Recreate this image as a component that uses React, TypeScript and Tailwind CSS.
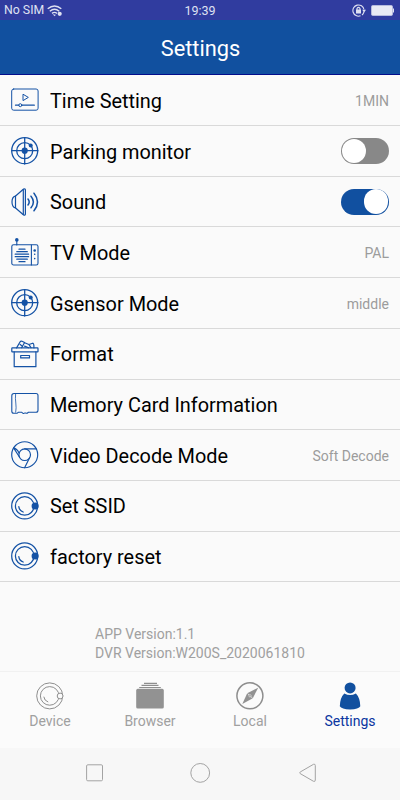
import type { ReactNode } from "react";

function Icon({ children, w = 1 }: { children: ReactNode; w?: number }) {
  return (
    <svg
      className="h-7 w-7 shrink-0"
      viewBox="0 0 28 28"
      fill="none"
      stroke="#1452a5"
      strokeWidth={w}
      strokeLinecap="round"
      strokeLinejoin="round"
    >
      {children}
    </svg>
  );
}

const TimeIcon = () => (
  <Icon>
    <rect x="0.7" y="3" width="26.4" height="21.2" rx="2" />
    <path d="M12 8.6v6l5-3z" />
    <path d="M4.5 19.2h3.2M11 19.2h12.3" strokeWidth="1.3" />
    <circle cx="9.3" cy="19.2" r="1.5" />
  </Icon>
);

const RadarIcon = () => (
  <Icon w={1.3}>
    <circle cx="13.7" cy="13.7" r="13" />
    <circle cx="13.7" cy="13.7" r="8" />
    <path d="M13.7 1v26M0.9 13.7h26" />
    <circle cx="13.7" cy="13.7" r="3.1" fill="#1452a5" stroke="none" />
    <circle cx="19.7" cy="8.4" r="2" fill="#1452a5" stroke="none" />
  </Icon>
);

const SoundIcon = () => (
  <Icon w={1.2}>
    <path d="M4.3 8.2 12.6 1q1.8-.7 1.8 1v24q0 1.7-1.8 1L4.3 19.8Q1 19 1 14t3.3-5.8z" />
    <path d="M4.5 8.2v11.5M12.3 1.5v25" />
    <path d="M17 11q2.4 3 0 6M20 8.2q4.8 5.8 0 11.6M23 5.2q7 8.8 0 17.6" strokeWidth="1.5" />
  </Icon>
);

const TvIcon = () => (
  <Icon w={1.1}>
    <rect x="0.8" y="6.7" width="26.2" height="20.3" rx="1.8" />
    <path d="M20.4 7v20M5.8 7V2.5" />
    <circle cx="5.8" cy="1.9" r="1.8" fill="#1452a5" stroke="none" />
    <path d="M8 11.2h6M5.8 13.7h10.5M4.2 16.2h13.4M4.2 18.7h13.4M5.8 21.2h10.5M8 23.7h6" strokeWidth="1.25" />
    <circle cx="23.7" cy="12.5" r="1.3" fill="#1452a5" stroke="none" />
    <path d="M23.7 16.2v.1M23.7 20.5v.1" strokeWidth="1.6" />
  </Icon>
);

const BoxIcon = () => (
  <Icon w={1.2}>
    <rect x="0.8" y="7.9" width="26.2" height="4" rx="0.5" />
    <path d="M3.2 11.9v14.8h21.7V11.9" />
    <rect x="9.7" y="15.5" width="8.8" height="2.4" />
    <path d="M5.6 7.9 9 2q.7-1.2 2-.7l2.6 1.2-3 5.2M13.6 2.7l4.3 1.8 3.8-1.3q1.4.2 1.2 4.7M9.2 4.5l2.4 2M13.6 6.1l4 1.6M18 4.7l2 3" />
  </Icon>
);

const CardIcon = () => (
  <Icon w={1.1}>
    <path d="M3 3.5h22q2 0 2 2v14.8q0 2-2 2h-7.6l-1.2 .9q-.8.3-1.4-.2h-1.2q-.7.8-1.6.3l-1.2-1H7.2L6 23.3H2.8q-2 0-2-2V5.7q0-2.2 2.2-2.2z" />
    <path d="M4.6 4q-.5 4.3.2 9t-.1 9.2" strokeWidth="0.8" />
  </Icon>
);

const ChromeIcon = () => (
  <Icon w={1.15}>
    <circle cx="13.7" cy="13.7" r="13" />
    <circle cx="13.7" cy="13.7" r="5.8" />
    <path d="M13.7 7.9h11.6M2.6 6.9l6 9.3M18.6 16.7l-5 10M2.6 6.9q3.8 1 5.4 5.2" />
  </Icon>
);

const Ring = ({ active }: { active?: boolean }) => (
  <>
    <circle cx="13.7" cy="13.9" r="13" />
    <circle cx="13.7" cy="13.9" r="9.3" />
    <path d="M7.8 14.7q.5 4 4.4 5.3" />
    <circle cx="24.1" cy="14" r="2.9" fill={active ? "#1452a5" : "#fafafa"} />
  </>
);

const RingIcon = () => (
  <Icon w={1.25}>
    <Ring active />
  </Icon>
);

const Value = ({ children }: { children: ReactNode }) => (
  <span className="pt-[2.4px] text-[14px] leading-5 text-[#9c9c9c]">{children}</span>
);

function Toggle({ on }: { on?: boolean }) {
  return (
    <span
      className={
        on
          ? "flex h-[26px] w-12 items-center justify-end rounded-full bg-[#1150a0] p-[0.7px]"
          : "flex h-[26px] w-12 items-center justify-start rounded-full bg-[#888888] p-[0.7px]"
      }
    >
      <span className="h-[24.6px] w-[24.6px] rounded-full bg-white" />
    </span>
  );
}

const rows: { icon: ReactNode; label: string; right?: ReactNode }[] = [
  { icon: <TimeIcon />, label: "Time Setting", right: <Value>1MIN</Value> },
  { icon: <RadarIcon />, label: "Parking monitor", right: <Toggle /> },
  { icon: <SoundIcon />, label: "Sound", right: <Toggle on /> },
  { icon: <TvIcon />, label: "TV Mode", right: <Value>PAL</Value> },
  { icon: <RadarIcon />, label: "Gsensor Mode", right: <Value>middle</Value> },
  { icon: <BoxIcon />, label: "Format" },
  { icon: <CardIcon />, label: "Memory Card Information" },
  { icon: <ChromeIcon />, label: "Video Decode Mode", right: <Value>Soft Decode</Value> },
  { icon: <RingIcon />, label: "Set SSID" },
  { icon: <RingIcon />, label: "factory reset" },
];

function Tab({ label, active, children }: { label: string; active?: boolean; children: ReactNode }) {
  return (
    <div className="flex w-[100px] flex-col items-center pt-[10px]">
      <svg className="h-7 w-7" viewBox="0 0 28 28" fill="none" stroke="#8e8e8e" strokeWidth="1">
        {children}
      </svg>
      <span
        className={
          active
            ? "mt-[1px] text-[14px] leading-5 text-[#0a35a0]"
            : "mt-[1px] text-[14px] leading-5 text-[#a0a0a0]"
        }
      >
        {label}
      </span>
    </div>
  );
}

export default function App() {
  return (
    <div className="flex h-[800px] w-[400px] flex-col overflow-hidden bg-[#fafafa] font-[Roboto,sans-serif]">
      <div className="grid h-5 shrink-0 grid-cols-3 items-center bg-[#303c9f] px-1 pt-px text-[12.5px] leading-[19px] text-[#dfe1f2]">
        <div className="flex items-center gap-[3px]">
          <span className="text-[12.3px]">No SIM</span>
          <svg className="h-3 w-4" viewBox="0 0 16 12" fill="none" stroke="#dfe1f2" strokeWidth="1.4">
            <path d="M.7 3.8Q7.5-2 14.3 3.8M2.8 6.2Q7.5 2.2 12.2 6.2M5 8.4q2.5-2 5 0" />
            <path d="m5.6 9.2 2 2 1.3-1.4z" fill="#dfe1f2" stroke="none" />
            <circle cx="12.7" cy="8.8" r="2.1" fill="#dfe1f2" stroke="none" />
          </svg>
        </div>
        <span className="text-center">19:39</span>
        <div className="flex items-center justify-end gap-[5px] pr-[2px] pb-px">
          <svg className="h-[13px] w-[14px]" viewBox="0 0 14 13" fill="none" stroke="#dfe1f2" strokeWidth="1.1">
            <path d="M8.5 11.8A5.6 5.6 0 1 1 12 5.5M12 7.5a5.6 5.6 0 0 1-2 3.5" />
            <path d="M10.2 5.8H14L12.1 8.5z" fill="#dfe1f2" stroke="none" />
            <rect x="4" y="5.5" width="5" height="4" fill="#dfe1f2" stroke="none" />
            <path d="M5 6V4.5q1.5-2.3 3 0V6" />
          </svg>
          <svg className="h-[11px] w-[23px]" viewBox="0 0 23 11">
            <rect x="0.5" y="0.5" width="21" height="10" rx="1.3" fill="#e9eaf5" stroke="#b7bbde" />
            <path d="M22.5 3.5v4" stroke="#dfe1f2" />
          </svg>
        </div>
      </div>

      <header className="flex h-[55px] shrink-0 items-center justify-center border-b border-[#020d8b] bg-[#11509f] pt-[5px] pl-px text-[21.8px] text-white">
        Settings
      </header>

      <main className="pt-[0.4px]">
        {rows.map((row) => (
          <div
            key={row.label}
            className="flex h-[50.7px] items-center border-b border-[#d9d9d9] pr-[11px] pl-[11px]"
          >
            {row.icon}
            <span className="ml-[11px] flex-1 pt-[3.4px] text-[19.9px] leading-[30px] text-black">{row.label}</span>
            {row.right}
          </div>
        ))}
      </main>

      <div className="flex h-[88.6px] shrink-0 flex-col pt-[42.6px] pl-[95px] text-[14px] leading-[19px] text-[#a0a0a0]">
        <span>APP Version:1.1</span>
        <span>DVR Version:W200S_2020061810</span>
      </div>

      <nav className="flex h-[77px] shrink-0 border-t border-[#f1f1f1] bg-[#fbfbfb]">
        <Tab label="Device">
          <Ring />
        </Tab>
        <Tab label="Browser">
          <rect x="0.2" y="6.8" width="27.6" height="19.8" rx="1.6" fill="#929292" stroke="none" />
          <path d="M8 1.4h13M5.5 3.4h17M3.2 5.5h21.6" strokeWidth="1.1" />
        </Tab>
        <Tab label="Local">
          <circle cx="13.9" cy="13.8" r="13" strokeWidth="1.5" />
          <path d="M22.2 5.7 16.8 16.2 6.3 22 11.2 11.3z" fill="#929292" stroke="none" />
          <path d="m11.4 11.4 5.3 4.9" stroke="#fafafa" strokeWidth="0.7" />
          <circle cx="14" cy="13.8" r="1.2" fill="#929292" stroke="#fafafa" strokeWidth="0.5" />
        </Tab>
        <Tab label="Settings" active>
          <circle cx="14.1" cy="5.9" r="5.5" fill="#11509f" stroke="none" />
          <path
            d="M8.3 11.5q5.8 3.2 11.6 0 4.2 4.2 4.4 12.8-1.5 3.1-10.2 3.1T3.8 24.3Q4 15.7 8.3 11.5z"
            fill="#11509f"
            stroke="none"
          />
        </Tab>
      </nav>

      <div className="flex flex-1 items-center justify-between bg-[#f7f7f7] pr-[83px] pb-px pl-[86px]">
        <svg className="h-[18px] w-[17px]" viewBox="0 0 17 18" fill="none" stroke="#a3a3a3">
          <rect x="0.6" y="0.8" width="15.9" height="16" rx="1.2" />
        </svg>
        <svg className="h-5 w-[22px]" viewBox="0 0 22 20" fill="none" stroke="#a3a3a3">
          <circle cx="10.2" cy="9.9" r="9.4" />
        </svg>
        <svg className="h-5 w-[18px]" viewBox="0 0 18 20" fill="none" stroke="#a3a3a3">
          <path d="M1.2 9 14.5 1.3q1.8-.6 1.8 1.2v14.6q0 1.8-1.8 1.2L1.2 10.6q-.9-.8 0-1.6z" />
        </svg>
      </div>
    </div>
  );
}
